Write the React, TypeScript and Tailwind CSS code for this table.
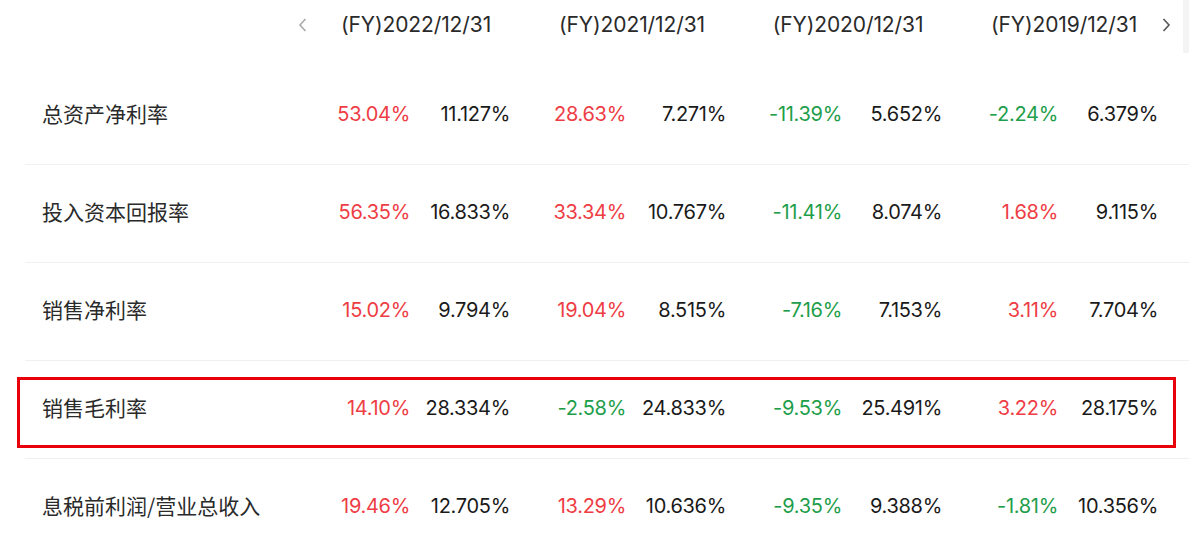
import React from 'react';

type Cell = [string, string];

const years = ['(FY)2022/12/31', '(FY)2021/12/31', '(FY)2020/12/31', '(FY)2019/12/31'];

const rows: { label: string; cells: Cell[]; highlight?: boolean }[] = [
  { label: '总资产净利率', cells: [['53.04%', '11.127%'], ['28.63%', '7.271%'], ['-11.39%', '5.652%'], ['-2.24%', '6.379%']] },
  { label: '投入资本回报率', cells: [['56.35%', '16.833%'], ['33.34%', '10.767%'], ['-11.41%', '8.074%'], ['1.68%', '9.115%']] },
  { label: '销售净利率', cells: [['15.02%', '9.794%'], ['19.04%', '8.515%'], ['-7.16%', '7.153%'], ['3.11%', '7.704%']] },
  { label: '销售毛利率', cells: [['14.10%', '28.334%'], ['-2.58%', '24.833%'], ['-9.53%', '25.491%'], ['3.22%', '28.175%']], highlight: true },
  { label: '息税前利润/营业总收入', cells: [['19.46%', '12.705%'], ['13.29%', '10.636%'], ['-9.35%', '9.388%'], ['-1.81%', '10.356%']] },
];

const Chevron = ({ dir, className }: { dir: 'left' | 'right'; className: string }) => (
  <svg width="10" height="16" viewBox="0 0 10 16" className={className} fill="none" stroke="currentColor" strokeWidth="1.6">
    {dir === 'left' ? <path d="M7.5 2 L2 8 L7.5 14" /> : <path d="M2.5 2 L8 8 L2.5 14" />}
  </svg>
);

const App: React.FC = () => {
  return (
    <div className="relative w-[1189px] h-[534px] overflow-hidden bg-white" style={{ fontFamily: 'Inter, "Noto Sans CJK SC", sans-serif' }}>
      <div className="absolute right-0 top-0 w-[6px] h-[53px] bg-[#f4f4f4]" />
      <div className="ml-[25px] w-[1164px]">
        <div className="relative flex h-[50px] items-center mb-[16px]">
          <div className="w-[283px]" />
          <Chevron dir="left" className="absolute left-[273px] top-[17px] text-[#aaa]" />
          {years.map((y) => (
            <div key={y} className="w-[216px] text-center text-[21px] text-[#2a2a2a] tracking-[-0.1px]">
              {y}
            </div>
          ))}
          <Chevron dir="right" className="absolute left-[1136px] top-[17px] text-[#555]" />
        </div>
        {rows.map((r, i) => (
          <div key={r.label} className={`relative flex h-[98px] items-center pb-[3px] ${i > 0 ? 'border-t border-[#f0f0f0]' : ''}`}>
            {r.highlight && (
              <div className="absolute left-[-8px] top-[16px] w-[1159px] h-[71px] border-[3px] border-[#e8000a]" />
            )}
            <div className="w-[283px] pl-[17px] text-[21px] text-[#2a2a2a]" style={{ fontFamily: '"Noto Sans CJK SC", sans-serif' }}>
              {r.label}
            </div>
            {r.cells.map(([chg, val], j) => (
              <div key={j} className="w-[216px] flex justify-end pr-[14px] text-[20px] tracking-[-0.3px]">
                <span className={chg.startsWith('-') ? 'text-[#1e9e4a]' : 'text-[#ee3d45]'}>{chg}</span>
                <span className="w-[100px] text-right text-[#1a1a1a]">{val}</span>
              </div>
            ))}
          </div>
        ))}
      </div>
    </div>
  );
};

export default App;
